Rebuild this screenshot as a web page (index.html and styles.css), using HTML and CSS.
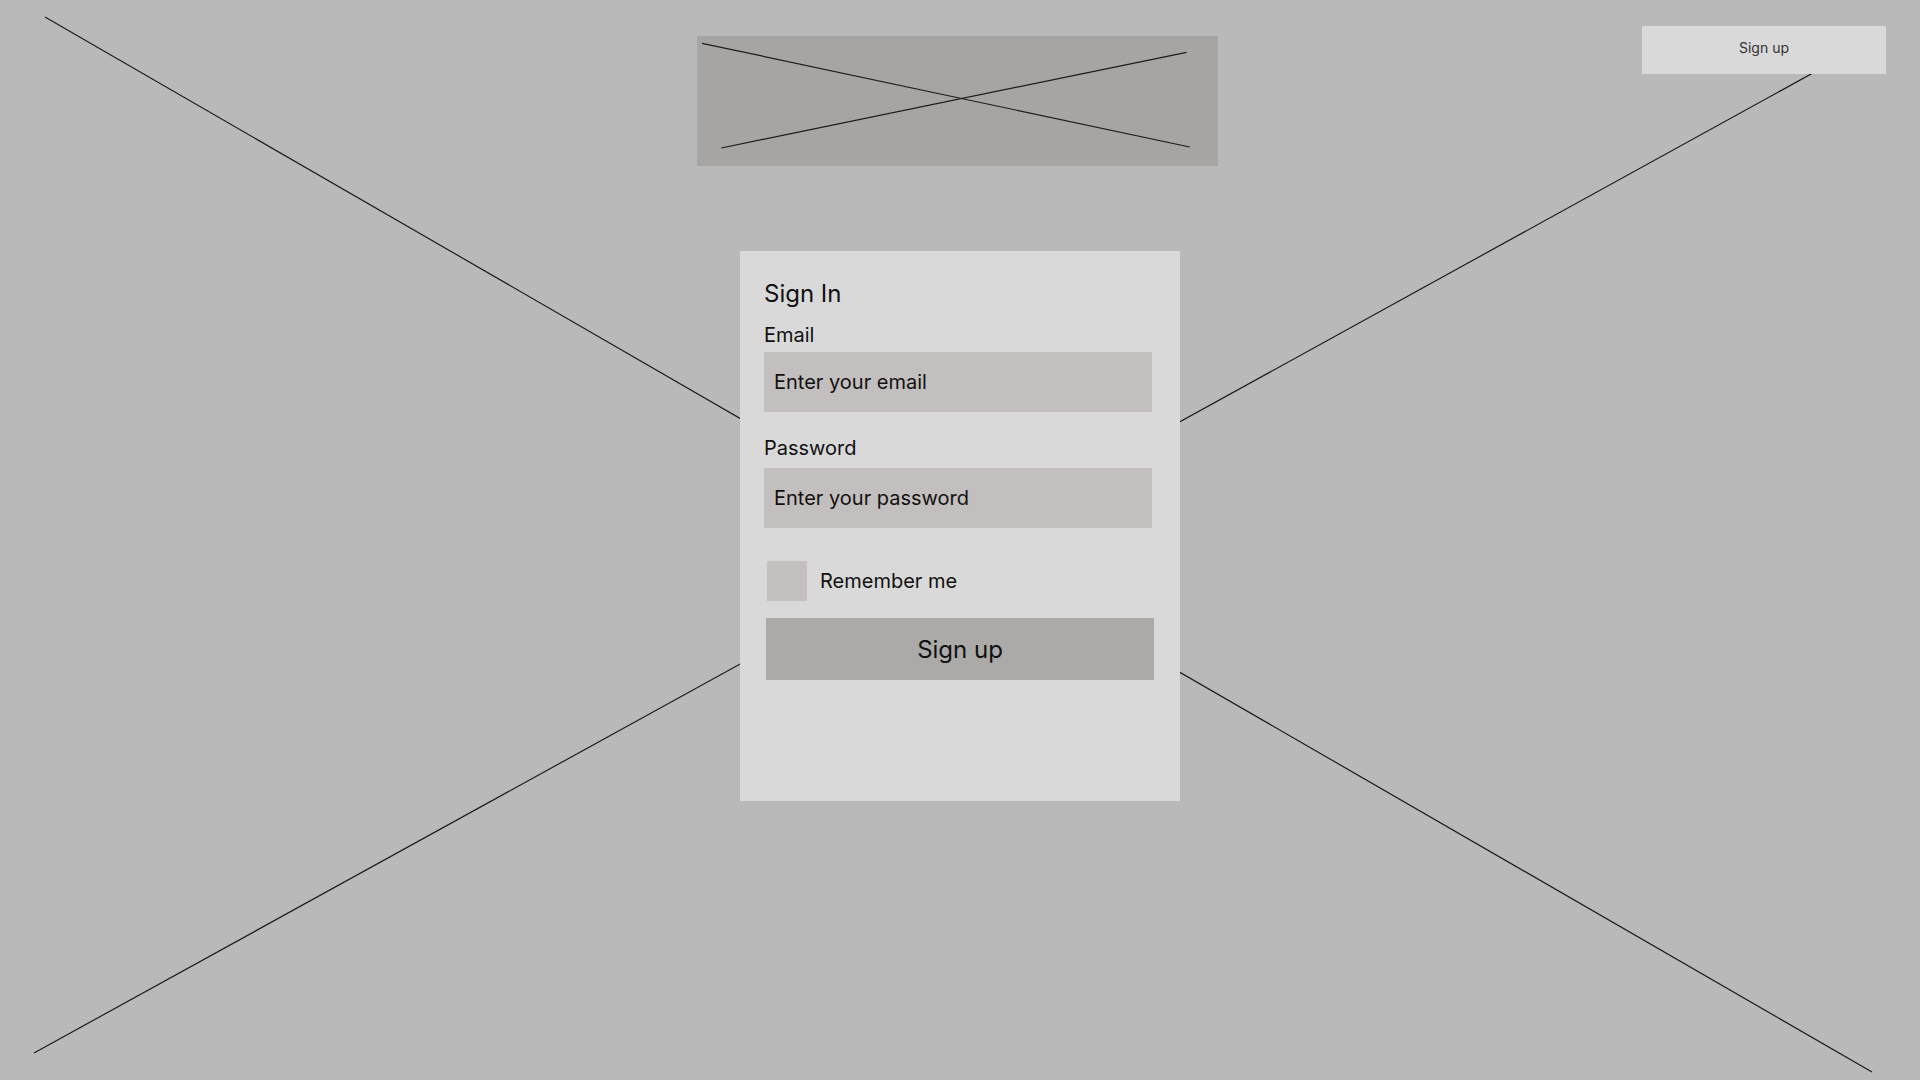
FILE: index.html
```html
<!DOCTYPE html>
<html lang="en">
<head>
  <meta charset="UTF-8" />
  <meta name="viewport" content="width=device-width, initial-scale=1.0"/>
  <title>Sign In</title>
  <link rel="stylesheet" href="styles.css">
</head>
<body>

  <!-- fundo: placeholder grande em X -->
  <svg class="backdrop" width="1920" height="1080" viewBox="0 0 1920 1080">
    <line x1="45" y1="17" x2="1872" y2="1072" />
    <line x1="34" y1="1053" x2="1880" y2="36" />
  </svg>

  <div class="page">
    <header class="top">
      <div class="logo">
        <svg width="521" height="130" viewBox="0 0 521 130">
          <line x1="5" y1="7.3" x2="492.7" y2="111" />
          <line x1="24.3" y1="112" x2="489.6" y2="16.3" />
        </svg>
      </div>
      <button class="top-btn">Sign up</button>
    </header>

    <form class="card">
      <h2 class="card-title">Sign In</h2>

      <label class="field-label email-label" for="email">Email</label>
      <input class="field" id="email" type="email" placeholder="Enter your email">

      <label class="field-label pass-label" for="password">Password</label>
      <input class="field" id="password" type="password" placeholder="Enter your password">

      <div class="remember">
        <span class="check"></span>
        <span class="remember-text">Remember me</span>
      </div>

      <button type="button" class="submit">Sign up</button>
    </form>
  </div>

</body>
</html>
```

FILE: styles.css
```css
* {
  margin: 0;
  padding: 0;
  box-sizing: border-box;
}
body {
  font-family: Inter, "Noto Sans", sans-serif;
  background-color: #b9b9b9;
  width: 1920px;
  height: 1080px;
  overflow: hidden;
  position: relative;
  color: #111;
}

/* linhas do fundo */
.backdrop {
  position: absolute;
  left: 0;
  top: 0;
  z-index: 0;
}
.backdrop line,
.logo line {
  stroke: #1c1c1c;
  stroke-width: 1.2;
}

.page {
  position: relative;
  z-index: 1;
}

/* Cabeçalho */
.top {
  display: grid;
  grid-template-columns: 697px 521px 1fr;
  height: 166px;
}
.logo {
  grid-column: 2;
  margin-top: 36px;
  width: 521px;
  height: 130px;
  background-color: #a6a5a3;
}
.logo svg {
  display: block;
}
.top-btn {
  grid-column: 3;
  justify-self: end;
  align-self: start;
  margin-top: 26px;
  margin-right: 34px;
  width: 244px;
  height: 48px;
  padding-bottom: 5px;
  border: none;
  background-color: #d9d9d9;
  font-family: Inter, "Noto Sans", sans-serif;
  font-size: 14px;
  color: #333;
}

/* Card de login */
.card {
  width: 440px;
  height: 550px;
  margin: 85px auto 0;
  padding: 28px 28px 0 24px;
  background-color: #d9d9d9;
  display: flex;
  flex-direction: column;
}
.card-title {
  font-size: 24px;
  font-weight: 400;
  line-height: 29px;
  margin-bottom: 15px;
}
.field-label {
  font-size: 20px;
  line-height: 24px;
}
.email-label {
  margin-bottom: 5px;
}
.pass-label {
  margin-top: 24px;
  margin-bottom: 8px;
}
.field {
  width: 388px;
  height: 60px;
  border: none;
  outline: none;
  background-color: #c3bfbe;
  padding: 0 10px;
  font-family: Inter, "Noto Sans", sans-serif;
  font-size: 20px;
  line-height: 24px;
  color: #111;
}
.field::placeholder {
  color: #111;
  opacity: 1;
}

.remember {
  display: flex;
  align-items: center;
  gap: 13px;
  margin-top: 33px;
  margin-left: 3px;
}
.check {
  width: 40px;
  height: 40px;
  background-color: #c4c0bf;
}
.remember-text {
  font-size: 20px;
  line-height: 24px;
}

.submit {
  margin-top: 17px;
  margin-left: 2px;
  width: 388px;
  height: 62px;
  border: none;
  background-color: #abaaa8;
  font-family: Inter, "Noto Sans", sans-serif;
  font-size: 24px;
  color: #111;
}
```
